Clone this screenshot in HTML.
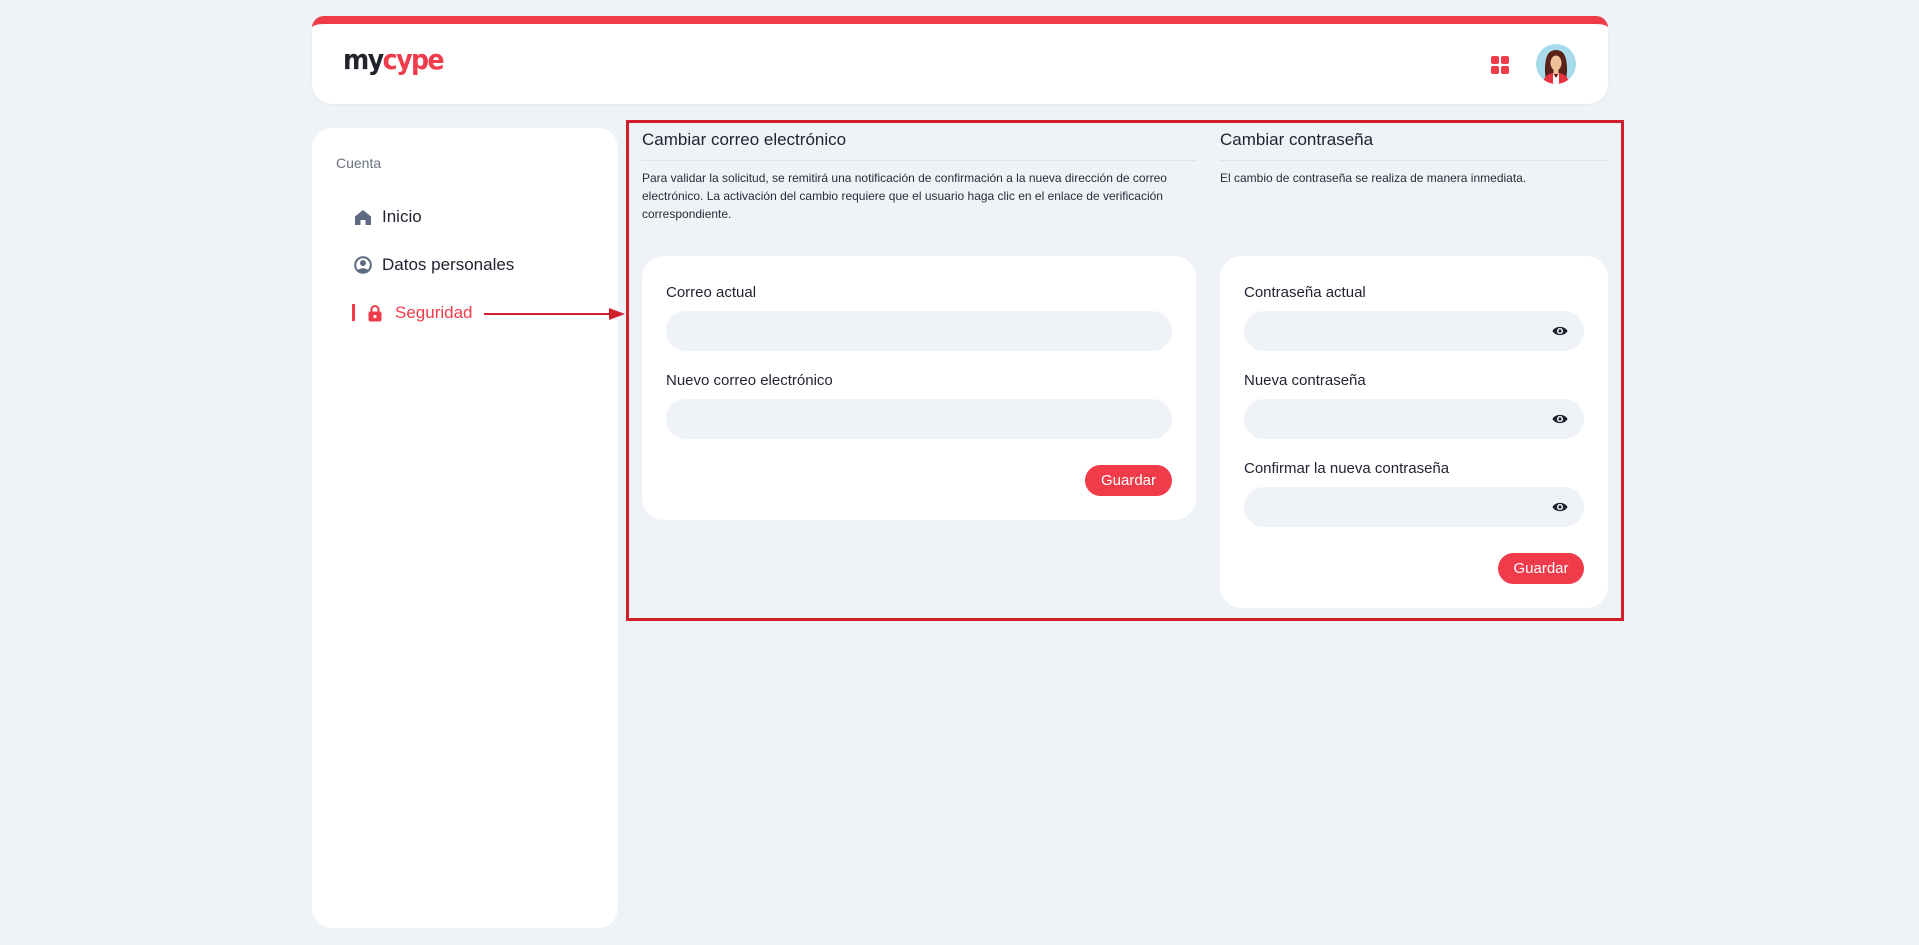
<!DOCTYPE html>
<html><head><meta charset="utf-8"><style>
*{box-sizing:border-box;margin:0;padding:0}
body{width:1919px;height:945px;background:#eff2f7;font-family:"Liberation Sans",sans-serif;color:#1f2230;position:relative;overflow:hidden}
.abs{position:absolute}
.header{left:312px;top:16px;width:1296px;height:88px;background:#fff;border-radius:12px 12px 20px 20px;border-top:8px solid #ef3b4a;box-shadow:0 1px 3px rgba(0,0,0,.04)}
.side{left:312px;top:128px;width:306px;height:800px;background:#fff;border-radius:20px}
.card{background:#fff;border-radius:22px}
.lbl{font-size:15px;color:#1f2230}
.inp{background:#eff2f7;border-radius:20px;height:40px}
.btn{background:#ef3b4a;color:#fff;border-radius:16px;font-size:15px;text-align:center;line-height:31px;height:31px}
.h{font-size:17px;color:#1f2230}
.d{font-size:12px;line-height:18px;color:#2a2d38}
.hr{height:1px;background:#dfe3ea}
.eye{width:16px;height:12px}
</style></head><body>
<div class="abs header"></div>
<div class="abs" style="left:343px;top:43px;font-size:28px;font-weight:bold;letter-spacing:-1.5px;font-family:'DejaVu Sans Condensed','Liberation Sans',sans-serif"><span style="color:#23232b">my</span><span style="color:#ef3b4a">cype</span></div>
<svg class="abs" style="left:1491px;top:56px" width="18" height="18"><rect x="0" y="0" width="8" height="8" rx="2" fill="#ef3b4a"/><rect x="10" y="0" width="8" height="8" rx="2" fill="#ef3b4a"/><rect x="0" y="10" width="8" height="8" rx="2" fill="#ef3b4a"/><rect x="10" y="10" width="8" height="8" rx="2" fill="#ef3b4a"/></svg>
<svg class="abs" style="left:1536px;top:44px" width="40" height="40" viewBox="0 0 40 40"><defs><clipPath id="c"><circle cx="20" cy="20" r="20"/></clipPath></defs><g clip-path="url(#c)"><rect width="40" height="40" fill="#a7dbe9"/><path d="M10 36 C8 26 9 18 11 12 C14 4 26 4 29 12 C31 18 32 26 30 36Z" fill="#5a2218"/><ellipse cx="20" cy="19" rx="5.5" ry="7.5" fill="#f0c09a"/><rect x="17.5" y="24" width="5" height="6" fill="#f0c09a"/><path d="M6 42 C7 33 12 30 17 29 L20 34 L23 29 C28 30 33 33 34 42Z" fill="#e8323f"/><path d="M17 29 L20 34 L23 29 L23 42 L17 42Z" fill="#fff"/></g></svg>

<div class="abs side"></div>
<div class="abs" style="left:336px;top:155px;font-size:14px;color:#6b7280">Cuenta</div>
<svg class="abs" style="left:355px;top:210px" width="16" height="15" viewBox="0 0 16 15"><path d="M8 0 L16 6.5 V15 H10.5 V10 H5.5 V15 H0 V6.5Z" fill="#5c6b82" stroke-linejoin="round"/></svg>
<div class="abs" style="left:382px;top:207px;font-size:17px">Inicio</div>
<svg class="abs" style="left:354px;top:256px" width="18" height="18" viewBox="0 0 18 18"><circle cx="9" cy="9" r="7.8" fill="none" stroke="#5c6b82" stroke-width="2"/><circle cx="9" cy="7" r="3" fill="#5c6b82"/><path d="M3.8 14.5 C5 11.5 13 11.5 14.2 14.5 L9 17Z" fill="#5c6b82"/></svg>
<div class="abs" style="left:382px;top:255px;font-size:17px">Datos personales</div>
<div class="abs" style="left:352px;top:304px;width:3px;height:17px;background:#ef3b4a"></div>
<svg class="abs" style="left:368px;top:304px" width="14" height="18" viewBox="0 0 14 18"><path d="M3.5 8 V5.5 a3.5 3.5 0 0 1 7 0 V8" fill="none" stroke="#ef3b4a" stroke-width="2"/><rect x="0.5" y="7.5" width="13" height="10" rx="2" fill="#ef3b4a"/><circle cx="7" cy="12.5" r="1.6" fill="#fff"/></svg>
<div class="abs" style="left:395px;top:303px;font-size:17px;color:#ef3b4a">Seguridad</div>
<svg class="abs" style="left:482px;top:306px" width="145" height="16"><line x1="2" y1="8" x2="130" y2="8" stroke="#d0202e" stroke-width="2"/><path d="M127 2 L143 8 L127 14Z" fill="#d0202e"/></svg>

<div class="abs" style="left:626px;top:120px;width:998px;height:501px;border:3px solid #d0202e"></div>

<div class="abs h" style="left:642px;top:130px">Cambiar correo electrónico</div>
<div class="abs hr" style="left:642px;top:160px;width:554px"></div>
<div class="abs d" style="left:642px;top:169px;width:560px">Para validar la solicitud, se remitirá una notificación de confirmación a la nueva dirección de correo electrónico. La activación del cambio requiere que el usuario haga clic en el enlace de verificación correspondiente.</div>
<div class="abs card" style="left:642px;top:256px;width:554px;height:264px"></div>
<div class="abs lbl" style="left:666px;top:284px">Correo actual</div>
<div class="abs inp" style="left:666px;top:311px;width:506px"></div>
<div class="abs lbl" style="left:666px;top:372px">Nuevo correo electrónico</div>
<div class="abs inp" style="left:666px;top:399px;width:506px"></div>
<div class="abs btn" style="left:1085px;top:465px;width:87px">Guardar</div>

<div class="abs h" style="left:1220px;top:130px">Cambiar contraseña</div>
<div class="abs hr" style="left:1220px;top:160px;width:387px"></div>
<div class="abs d" style="left:1220px;top:169px">El cambio de contraseña se realiza de manera inmediata.</div>
<div class="abs card" style="left:1220px;top:256px;width:388px;height:352px"></div>
<div class="abs lbl" style="left:1244px;top:284px">Contraseña actual</div>
<div class="abs inp" style="left:1244px;top:311px;width:340px"></div>
<div class="abs lbl" style="left:1244px;top:372px">Nueva contraseña</div>
<div class="abs inp" style="left:1244px;top:399px;width:340px"></div>
<div class="abs lbl" style="left:1244px;top:460px">Confirmar la nueva contraseña</div>
<div class="abs inp" style="left:1244px;top:487px;width:340px"></div>
<svg class="abs eye" style="left:1552px;top:325px" viewBox="0 0 16 12"><path d="M0.5 6 C3 0.5 13 0.5 15.5 6 C13 11.5 3 11.5 0.5 6Z" fill="#1f2230"/><circle cx="8" cy="6" r="3" fill="#fff"/><circle cx="8" cy="6" r="1.6" fill="#1f2230"/></svg>
<svg class="abs eye" style="left:1552px;top:413px" viewBox="0 0 16 12"><path d="M0.5 6 C3 0.5 13 0.5 15.5 6 C13 11.5 3 11.5 0.5 6Z" fill="#1f2230"/><circle cx="8" cy="6" r="3" fill="#fff"/><circle cx="8" cy="6" r="1.6" fill="#1f2230"/></svg>
<svg class="abs eye" style="left:1552px;top:501px" viewBox="0 0 16 12"><path d="M0.5 6 C3 0.5 13 0.5 15.5 6 C13 11.5 3 11.5 0.5 6Z" fill="#1f2230"/><circle cx="8" cy="6" r="3" fill="#fff"/><circle cx="8" cy="6" r="1.6" fill="#1f2230"/></svg>
<div class="abs btn" style="left:1498px;top:553px;width:86px">Guardar</div>
</body></html>
